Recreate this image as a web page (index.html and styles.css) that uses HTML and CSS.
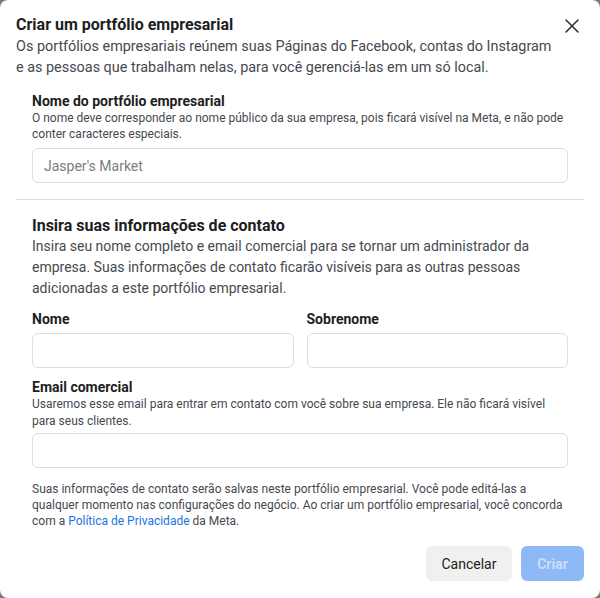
FILE: index.html
```html
<!DOCTYPE html>
<html lang="pt-BR">
  <head>
    <meta charset="UTF-8" />
    <meta name="viewport" content="width=device-width, initial-scale=1.0" />
    <title>Criar um portfólio empresarial</title>
    <link rel="stylesheet" href="styles.css">
  </head>
  <body>
    <!-- Create business portfolio dialog -->
    <div class="dialog">
      <div class="dialog-header">
        <div>
          <h2 class="dialog-title">Criar um portfólio empresarial</h2>
          <p class="dialog-intro">
            Os portfólios empresariais reúnem suas Páginas do Facebook, contas do Instagram<br />
            e as pessoas que trabalham nelas, para você gerenciá-las em um só local.
          </p>
        </div>
        <button class="close-btn" aria-label="Fechar">
          <svg width="16" height="16" viewBox="0 0 16 16">
            <path d="M2 2 L14 14 M14 2 L2 14" stroke="#333" stroke-width="1.6" stroke-linecap="round" />
          </svg>
        </button>
      </div>

      <div class="section section-portfolio">
        <label class="field-label" for="portfolio">Nome do portfólio empresarial</label>
        <p class="field-help">
          O nome deve corresponder ao nome público da sua empresa, pois ficará visível na Meta, e não pode
          conter caracteres especiais.
        </p>
        <input type="text" id="portfolio" placeholder="Jasper's Market" />
      </div>

      <hr class="divider" />

      <div class="section">
        <h3 class="section-title">Insira suas informações de contato</h3>
        <p class="section-text">
          Insira seu nome completo e email comercial para se tornar um administrador da
          empresa. Suas informações de contato ficarão visíveis para as outras pessoas
          adicionadas a este portfólio empresarial.
        </p>

        <div class="name-row">
          <div>
            <label class="field-label" for="first">Nome</label>
            <input type="text" id="first" />
          </div>
          <div>
            <label class="field-label" for="last">Sobrenome</label>
            <input type="text" id="last" />
          </div>
        </div>

        <div class="email-group">
          <label class="field-label" for="email">Email comercial</label>
          <p class="field-help email-help">
            Usaremos esse email para entrar em contato com você sobre sua empresa. Ele não ficará visível
            para seus clientes.
          </p>
          <input type="email" id="email" />
        </div>

        <p class="legal">
          Suas informações de contato serão salvas neste portfólio empresarial. Você pode editá-las a
          qualquer momento nas configurações do negócio. Ao criar um portfólio empresarial, você concorda
          com a <a href="#">Política de Privacidade</a> da Meta.
        </p>
      </div>

      <div class="dialog-footer">
        <button class="btn btn-secondary">Cancelar</button>
        <button class="btn btn-primary" disabled>Criar</button>
      </div>
    </div>
  </body>
</html>
```

FILE: styles.css
```css
body {
  font-family: Roboto, "Liberation Sans", sans-serif;
  background-color: #7b7b7b;
  margin: 0;
  color: #444950;
}
.dialog {
  background-color: #ffffff;
  border-radius: 8px;
  width: 600px;
  height: 598px;
  box-sizing: border-box;
  padding: 14px 16px 0 16px;
  overflow: hidden;
}
.dialog-header {
  display: flex;
  justify-content: space-between;
  align-items: flex-start;
}
.dialog-title {
  margin: 0;
  font-size: 16px;
  line-height: 22px;
  font-weight: 700;
  color: #1c1e21;
}
.dialog-intro {
  margin: 0;
  font-size: 14.4px;
  line-height: 21px;
  color: #444950;
}
.close-btn {
  background: none;
  border: none;
  padding: 4px;
  margin: 0;
  cursor: pointer;
  display: flex;
}
.section {
  padding: 0 16px;
}
.section-portfolio {
  margin-top: 14px;
}
.field-label {
  display: block;
  font-size: 14px;
  line-height: 18px;
  font-weight: 700;
  color: #1c1e21;
}
.field-help {
  margin: 0 0 6px 0;
  font-size: 12px;
  line-height: 16px;
  color: #444950;
}
.email-help {
  line-height: 17px;
  margin-bottom: 3px;
}
input {
  display: block;
  width: 100%;
  height: 35px;
  padding: 0 11px;
  border: 1px solid #dadde1;
  border-radius: 6px;
  font-family: inherit;
  font-size: 14px;
  color: #1c1e21;
  box-sizing: border-box;
}
input::placeholder {
  color: #7a7d81;
}
.divider {
  border: none;
  border-top: 1px solid #dadde1;
  margin: 16px 0 16px 0;
}
.section-title {
  margin: 0;
  font-size: 16px;
  line-height: 20px;
  font-weight: 700;
  color: #1c1e21;
}
.section-text {
  margin: 0 0 11px 0;
  font-size: 14px;
  line-height: 21px;
  color: #444950;
}
.name-row {
  display: grid;
  grid-template-columns: 1fr 1fr;
  gap: 13px;
}
.name-row .field-label {
  margin-bottom: 5px;
}
.email-group {
  margin-top: 10px;
}
.legal {
  margin: 13px 0 0 0;
  font-size: 12px;
  line-height: 16px;
  color: #444950;
}
.legal a {
  color: #1b74e4;
  text-decoration: none;
}
.dialog-footer {
  display: flex;
  justify-content: flex-end;
  gap: 9px;
  margin-top: 17px;
}
.btn {
  height: 35px;
  border: none;
  border-radius: 6px;
  font-family: inherit;
  font-size: 14px;
  padding: 0 12px;
  cursor: pointer;
}
.btn-secondary {
  background-color: #f0f0f0;
  color: #1c1e21;
  width: 86px;
}
.btn-primary {
  background-color: #8dbaf6;
  color: #c9defa;
  font-weight: 700;
  width: 63px;
}
```
